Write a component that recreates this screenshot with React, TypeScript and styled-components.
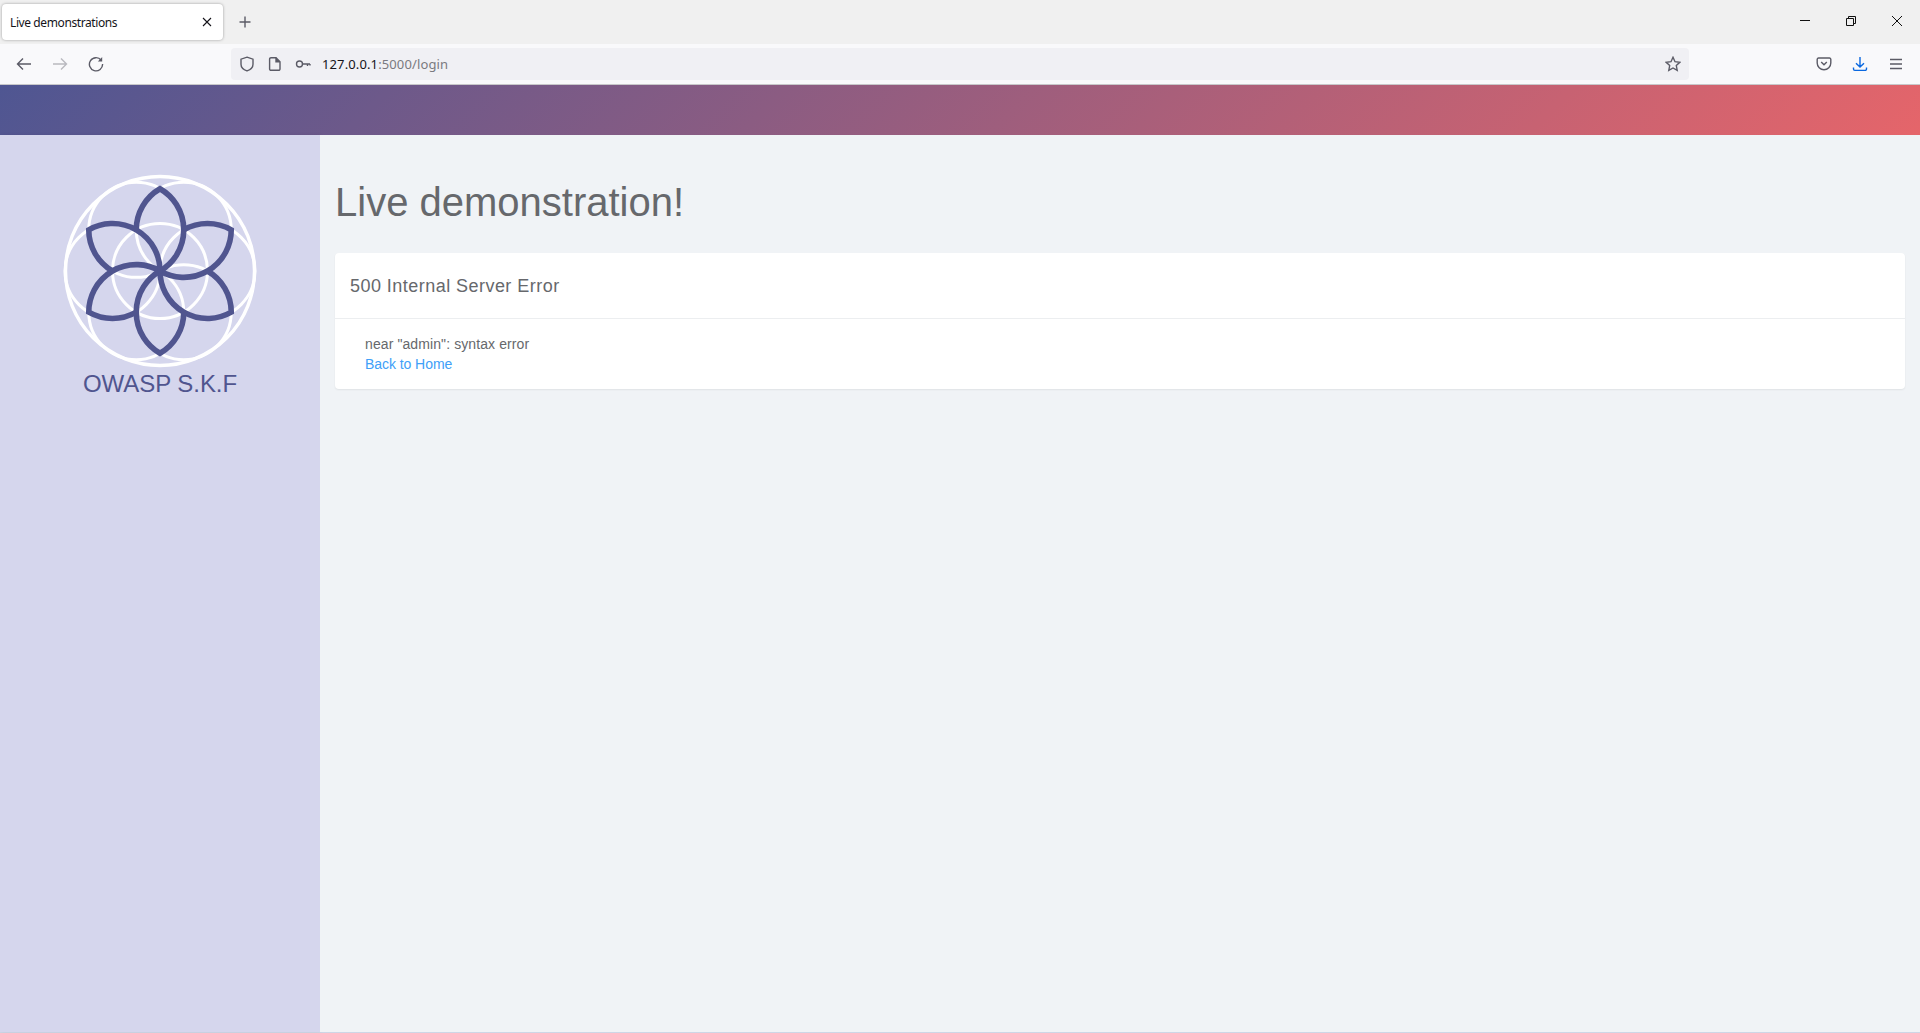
import React from 'react';
import styled, { createGlobalStyle } from 'styled-components';

const GlobalStyle = createGlobalStyle`
  html, body {
    margin: 0;
    padding: 0;
    height: 100%;
    overflow: hidden;
    background: #f0f3f6;
  }
  #root {
    height: 1033px;
  }
`;

/// Browser chrome
const Browser = styled.div`
  display: flex;
  flex-direction: column;
  height: 1033px;
  box-sizing: border-box;
  border-bottom: 1px solid #cdd6e6;
  font-family: "Liberation Sans", Arial, sans-serif;
`;

const TabStrip = styled.div`
  display: flex;
  align-items: center;
  height: 44px;
  flex: none;
  box-sizing: border-box;
  padding: 4px 0 4px 2px;
  background: #f0f0f0;
`;

const Tab = styled.div`
  display: flex;
  align-items: center;
  justify-content: space-between;
  width: 221px;
  height: 36px;
  box-sizing: border-box;
  padding: 0 8px;
  background: #fff;
  border-radius: 4px;
  box-shadow: 0 0 3px rgba(0, 0, 0, 0.35);
  font-family: "Noto Sans", "Open Sans", sans-serif;
  font-size: 12px;
  letter-spacing: -0.4px;
  color: #15141a;
`;

const NewTab = styled.div`
  display: flex;
  align-items: center;
  justify-content: center;
  width: 36px;
  height: 36px;
  margin-left: 4px;
`;

const StripSpacer = styled.div`
  flex: 1;
`;

const WindowButton = styled.div`
  display: flex;
  align-items: center;
  justify-content: center;
  width: 46px;
  height: 44px;
  margin-top: -2px;
`;

const Toolbar = styled.div`
  display: flex;
  align-items: center;
  height: 41px;
  flex: none;
  box-sizing: border-box;
  padding: 0 6px 1px;
  background: #f9f9fb;
  border-bottom: 1px solid #c8c8ca;
`;

const ToolButton = styled.div`
  display: flex;
  align-items: center;
  justify-content: center;
  width: 36px;
  height: 32px;
`;

const UrlBar = styled.div`
  display: flex;
  align-items: center;
  flex: 1;
  height: 32px;
  margin: 0 117px;
  padding: 0 8px 0 2px;
  border-radius: 4px;
  background: #f0f0f4;
`;

const UrlIcon = styled.div`
  display: flex;
  align-items: center;
  justify-content: center;
  width: 28px;
  height: 32px;
`;

const UrlText = styled.div`
  flex: 1;
  margin-left: 5px;
  padding-top: 1px;
  font-family: "Noto Sans", "Open Sans", sans-serif;
  font-size: 13px;
  letter-spacing: 0.12px;
  color: #15141a;
  white-space: nowrap;
`;

const UrlDim = styled.span`
  color: #7a7a80;
`;

/// Page
const Banner = styled.div`
  height: 50px;
  flex: none;
  background: linear-gradient(135deg, #4f5692, #e5656a);
`;

const Page = styled.div`
  display: flex;
  flex: 1;
  min-height: 0;
`;

const Sidebar = styled.aside`
  display: flex;
  flex-direction: column;
  align-items: center;
  width: 320px;
  flex: none;
  box-sizing: border-box;
  padding-top: 36px;
  background: #d5d6ed;
  box-shadow: 1px 0 4px rgba(0, 0, 0, 0.06);
`;

const Brand = styled.div`
  margin-top: -1px;
  font-size: 24px;
  line-height: 28px;
  letter-spacing: -0.05px;
  color: #50558f;
`;

const Main = styled.main`
  flex: 1;
  padding: 0 15px;
  background: #f0f3f6;
`;

const Title = styled.h1`
  margin: 43px 0 27px;
  font-size: 40px;
  font-weight: 400;
  line-height: 48px;
  color: #66686c;
`;

const Card = styled.section`
  background: #fff;
  border-radius: 4px;
  box-shadow: 0 1px 2px rgba(0, 0, 0, 0.07);
`;

const CardHeader = styled.h2`
  margin: 0;
  padding: 0 15px;
  height: 65px;
  font-size: 18px;
  font-weight: 400;
  line-height: 67px;
  letter-spacing: 0.46px;
  color: #66686c;
  border-bottom: 1px solid #eceef0;
`;

const CardBody = styled.div`
  padding: 15px 30px;
  font-size: 14px;
  line-height: 20px;
  letter-spacing: 0.1px;
  color: #66686c;
`;

const BackLink = styled.a`
  display: block;
  letter-spacing: -0.06px;
  color: #40a0f8;
  text-decoration: none;
`;

/// Logo
const R = 47.5;
const TIP = R * Math.sqrt(3);
const ANGLES = [0, 60, 120, 180, 240, 300];

const Logo = () => (
  <svg width="200" height="200" viewBox="-100 -100 200 200">
    <g fill="none" stroke="#fff" strokeWidth="3">
      <circle r="94.5" strokeWidth="3.4"/>
      <circle r={ R }/>
      { ANGLES.map(a => (
        <circle key={ a } r={ R } cx={ R * Math.cos(a * Math.PI / 180) } cy={ R * Math.sin(a * Math.PI / 180) }/>
      )) }
    </g>
    <g fill="none" stroke="#50558f" strokeWidth="5.6" strokeLinejoin="miter" strokeMiterlimit="6">
      { ANGLES.map(a => (
        <path key={ a } transform={ `rotate(${ a })` }
              d={ `M${ -R / 2 } ${ -TIP / 2 } A${ R } ${ R } 0 0 1 0 ${ -TIP } A${ R } ${ R } 0 0 1 0 0` }/>
      )) }
    </g>
  </svg>
);

/// Icons
const Stroke = styled.svg`
  display: block;
  flex: none;
  fill: none;
  stroke: ${ props => props.color || '#5b5b66' };
  stroke-width: 1.4;
`;

const App = () => (
  <Browser>
    <GlobalStyle/>
    <TabStrip>
      <Tab>
        Live demonstrations
        <Stroke width="16" height="16" viewBox="0 0 16 16" color="#15141a">
          <path d="M4 4l8 8M12 4l-8 8" strokeWidth="1.1"/>
        </Stroke>
      </Tab>
      <NewTab>
        <Stroke width="16" height="16" viewBox="0 0 16 16">
          <path d="M8 2.5v11M2.5 8h11"/>
        </Stroke>
      </NewTab>
      <StripSpacer/>
      <WindowButton>
        <Stroke width="12" height="12" viewBox="0 0 12 12" color="#111">
          <path d="M1 5.5h10" strokeWidth="1"/>
        </Stroke>
      </WindowButton>
      <WindowButton>
        <Stroke width="12" height="12" viewBox="0 0 12 12" color="#111">
          <path d="M1.5 3.5h7v7h-7zM3.5 3.5v-2h7v7h-2" strokeWidth="1"/>
        </Stroke>
      </WindowButton>
      <WindowButton>
        <Stroke width="12" height="12" viewBox="0 0 12 12" color="#111">
          <path d="M1 1l10 10M11 1L1 11" strokeWidth="1"/>
        </Stroke>
      </WindowButton>
    </TabStrip>
    <Toolbar>
      <ToolButton>
        <Stroke width="16" height="16" viewBox="0 0 16 16">
          <path d="M15 8H1.5M7 2.5L1.5 8 7 13.5"/>
        </Stroke>
      </ToolButton>
      <ToolButton>
        <Stroke width="16" height="16" viewBox="0 0 16 16" color="#b9b9bf">
          <path d="M1 8h13.5M9 2.5L14.5 8 9 13.5"/>
        </Stroke>
      </ToolButton>
      <ToolButton>
        <Stroke width="16" height="16" viewBox="0 0 16 16">
          <path d="M13.2 4.2A6.6 6.6 0 1 0 14.6 8"/>
          <path d="M14.2 1v4.4H9.8z" fill="#5b5b66" stroke="none"/>
        </Stroke>
      </ToolButton>
      <UrlBar>
        <UrlIcon>
          <Stroke width="16" height="16" viewBox="0 0 16 16">
            <path d="M8 1.2l6 2v5c0 3.2-2.6 5.5-6 6.7-3.4-1.2-6-3.5-6-6.7v-5z"/>
          </Stroke>
        </UrlIcon>
        <UrlIcon>
          <Stroke width="16" height="16" viewBox="0 0 16 16">
            <path d="M4 1.7h5l4 4v7.2a1.4 1.4 0 0 1-1.4 1.4H4a1.4 1.4 0 0 1-1.4-1.4V3.1A1.4 1.4 0 0 1 4 1.7z"/>
            <path d="M9 1.7v4h4" fill="#5b5b66"/>
          </Stroke>
        </UrlIcon>
        <UrlIcon>
          <Stroke width="16" height="16" viewBox="0 0 16 16">
            <circle cx="4.5" cy="8" r="3"/>
            <path d="M7.5 8H15M12.5 8v2M15 8v1.5"/>
          </Stroke>
        </UrlIcon>
        <UrlText>127.0.0.1<UrlDim>:5000/login</UrlDim></UrlText>
        <Stroke width="16" height="16" viewBox="0 0 16 16">
          <path d="M8 1.3l2 4.4 4.8.6-3.5 3.3.9 4.8L8 12l-4.2 2.4.9-4.8L1.2 6.3 6 5.7z"/>
        </Stroke>
      </UrlBar>
      <ToolButton>
        <Stroke width="16" height="16" viewBox="0 0 16 16">
          <path d="M2.5 2h11A1.3 1.3 0 0 1 14.8 3.3V7a6.8 6.8 0 0 1-13.6 0V3.3A1.3 1.3 0 0 1 2.5 2z"/>
          <path d="M5.2 6L8 8.7 10.8 6"/>
        </Stroke>
      </ToolButton>
      <ToolButton>
        <Stroke width="16" height="16" viewBox="0 0 16 16" color="#0a68e0">
          <path d="M8 1v10M4 7.2L8 11l4-3.8M1.5 11.5v1.6a1.3 1.3 0 0 0 1.3 1.3h10.4a1.3 1.3 0 0 0 1.3-1.3v-1.6"/>
        </Stroke>
      </ToolButton>
      <ToolButton>
        <Stroke width="16" height="16" viewBox="0 0 16 16">
          <path d="M2 3.5h12M2 8h12M2 12.5h12"/>
        </Stroke>
      </ToolButton>
    </Toolbar>
    <Banner/>
    <Page>
      <Sidebar>
        <Logo/>
        <Brand>OWASP S.K.F</Brand>
      </Sidebar>
      <Main>
        <Title>Live demonstration!</Title>
        <Card>
          <CardHeader>500 Internal Server Error</CardHeader>
          <CardBody>
            near "admin": syntax error
            <BackLink href="#">Back to Home</BackLink>
          </CardBody>
        </Card>
      </Main>
    </Page>
  </Browser>
);

export default App;
